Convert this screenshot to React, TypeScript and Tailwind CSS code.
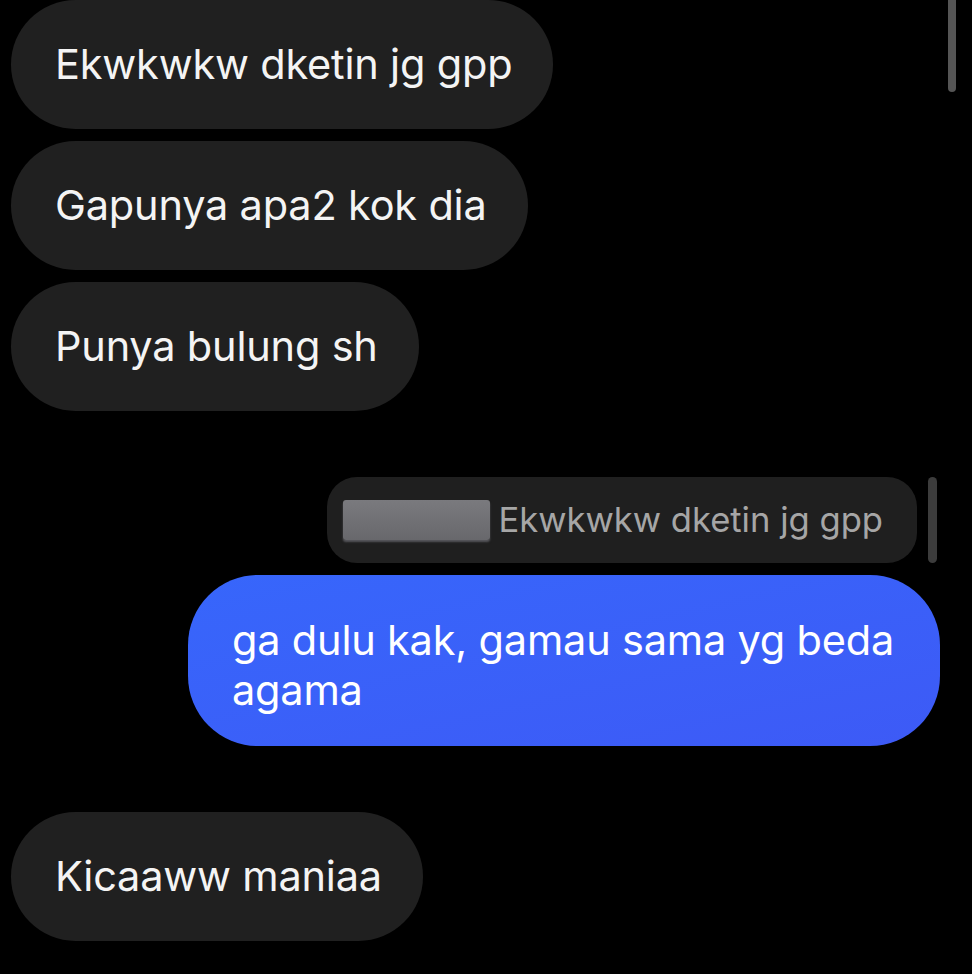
import React from "react";

const font = { fontFamily: "Inter, 'Noto Sans', sans-serif" };

function Left({ text }: { text: string }) {
  return (
    <div className="flex">
      <div className="h-[129px] rounded-full bg-[#202020] pl-[44px] pr-[41px] flex items-center text-[41.5px] text-[#f4f4f4] tracking-[-0.2px]">
        {text}
      </div>
    </div>
  );
}

export default function App() {
  return (
    <div className="relative w-[972px] h-[974px] bg-black overflow-hidden" style={font}>
      <div className="absolute right-[16px] top-0 w-[8px] h-[92px] rounded-b-full bg-[#555555]" />
      <div className="flex flex-col pl-[11px] pr-[32px] gap-[12px]">
        <Left text="Ekwkwkw dketin jg gpp" />
        <Left text="Gapunya apa2 kok dia" />
        <Left text="Punya bulung sh" />
        <div className="h-[42px]" />
        <div className="flex justify-end items-stretch gap-[11px] pr-[3px]">
          <div className="h-[86px] rounded-[30px] bg-[#1f1f1f] pl-[16px] pr-[34px] flex items-center gap-[8px]">
            <div className="w-[147px] h-[40px] rounded-[3px] bg-gradient-to-b from-[#7a7a7e] to-[#68686c] shadow-[0_2px_2px_rgba(140,140,150,0.5)]" />
            <span className="text-[34.6px] text-[#a6a6a6]">Ekwkwkw dketin jg gpp</span>
          </div>
          <div className="w-[9px] rounded-full bg-[#3c3c3c]" />
        </div>
        <div className="flex justify-end">
          <div className="w-[752px] h-[171px] rounded-[70px] bg-gradient-to-br from-[#3766fb] to-[#3d5af6] pl-[44px] pr-[36px] pt-[40px] text-[41.5px] leading-[50px] text-white tracking-[-0.2px]">
            ga dulu kak, gamau sama yg beda agama
          </div>
        </div>
        <div className="h-[42px]" />
        <Left text="Kicaaww maniaa" />
      </div>
    </div>
  );
}
